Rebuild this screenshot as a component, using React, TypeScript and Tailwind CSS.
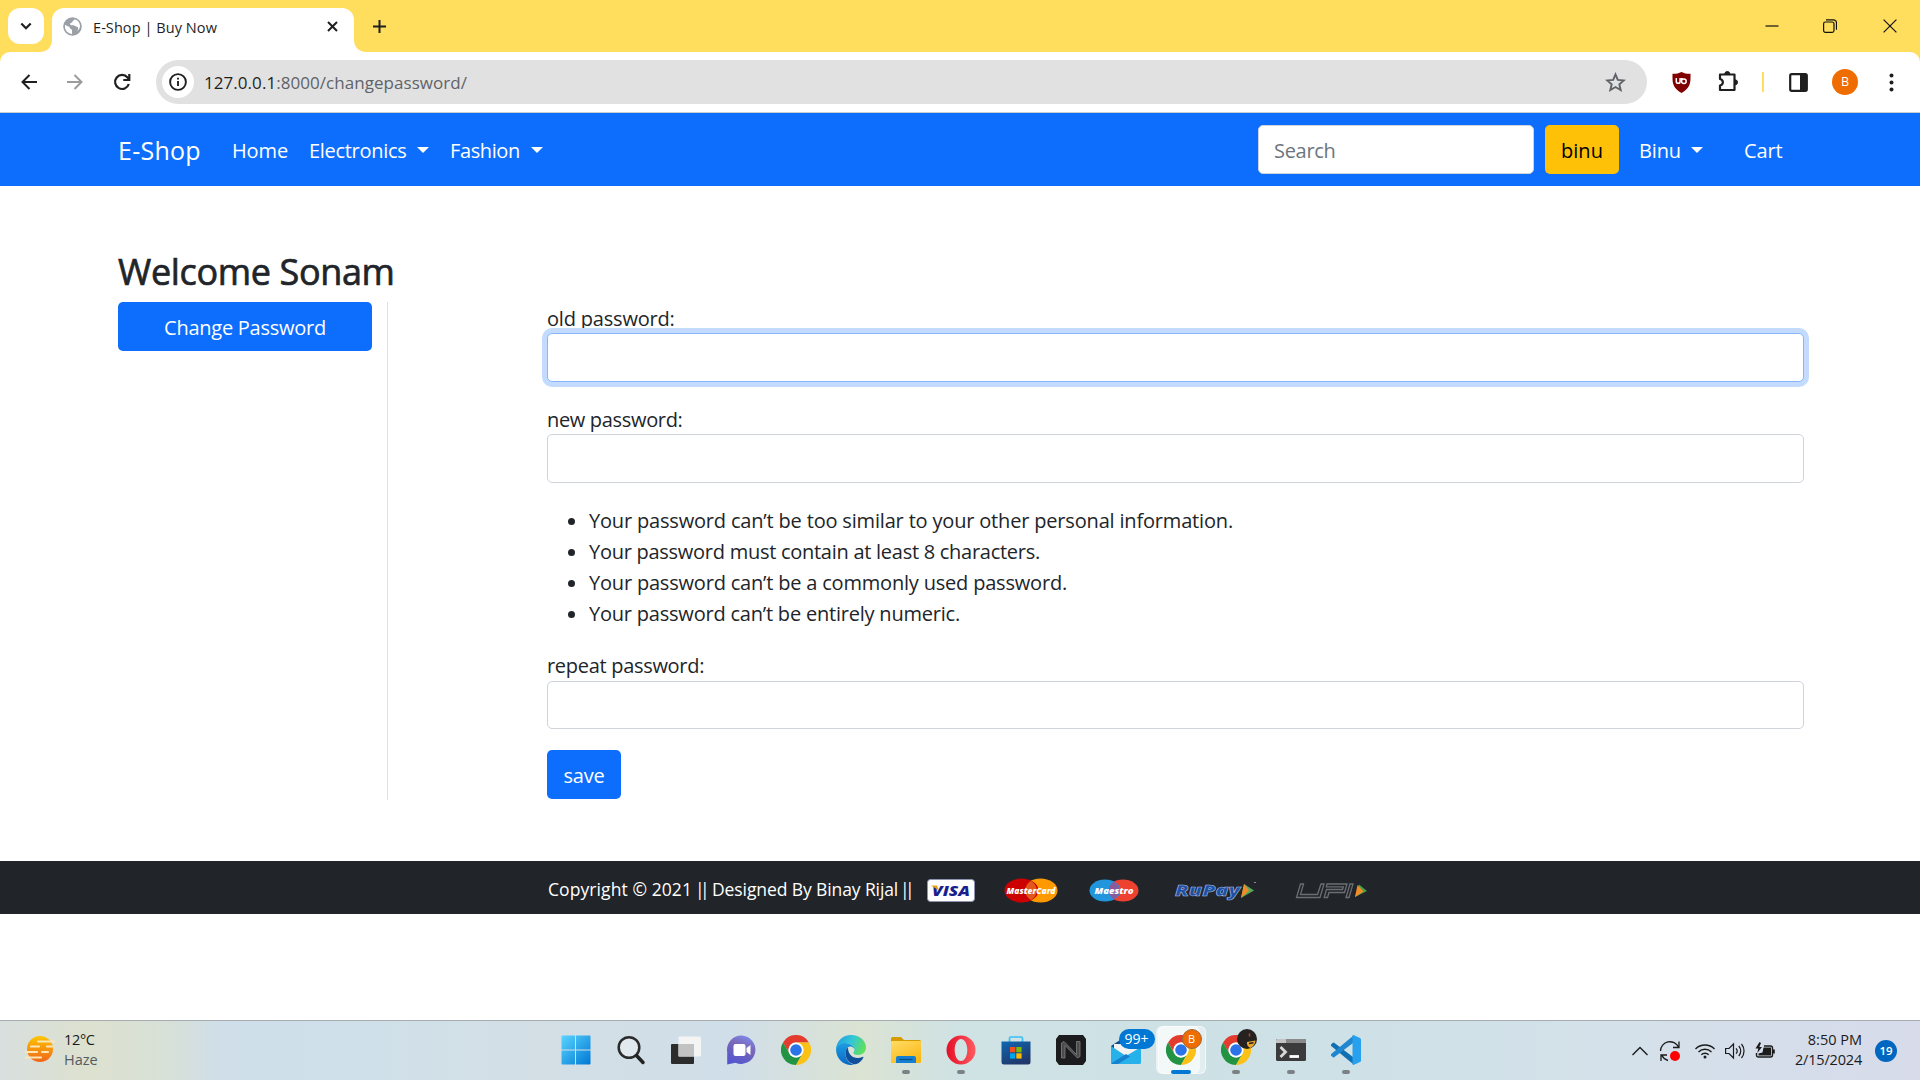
import React from "react";

const UI = "font-['Open_Sans','Noto_Sans',sans-serif]";

function Caret({ className = "" }: { className?: string }) {
  return (
    <span
      className={`inline-block h-0 w-0 border-x-[6px] border-t-[6px] border-x-transparent border-t-white ${className}`}
    />
  );
}

/* ---------- Browser chrome ---------- */

function Globe() {
  return (
    <svg className="h-[19px] w-[19px]" viewBox="0 0 20 20">
      <circle cx="10" cy="10" r="9.8" fill="#9aa0a6" />
      <path d="M2.2 8.2c2.2 2 4.600 1.300 5 3.300.3 1.300 2.300.7 2.300 2.500v3.800C5.500 17.600 2 14.300 2 10z" fill="#fff" />
      <path d="M12.300 2.400c-.3 1.500-2.300 1-2.400 2.600-.1 1.400-2.300.6-2.400 2.300 0 1.400 2 1.700 3.300 1.400 1.500-.3 1.900 1.200 3.600 1.500 1.700.2 1.700 1.400 1.300 2.900l-.9 2A8 8 0 0 0 18 10c0-3.500-2.300-6.600-5.700-7.600z" fill="#fff" />
    </svg>
  );
}

function TabStrip() {
  return (
    <div className="flex h-[52px] bg-[#ffde5d] pl-2">
      <div className="mt-2 flex h-9 w-9 items-center justify-center rounded-xl bg-white">
        <svg className="h-3 w-3" viewBox="0 0 12 12" fill="none" stroke="#1f1f1f" strokeWidth="2.2">
          <path d="M1.300 3.500 6 8.200l4.700-4.700" />
        </svg>
      </div>
      <svg className="mt-10 ml-[-4px] h-3 w-3" viewBox="0 0 12 12">
        <path d="M12 0v12H0C7 12 12 7 12 0z" fill="#fff" />
      </svg>
      <div className="mt-2 flex h-11 w-[302px] items-center rounded-t-xl bg-white pb-[7px] pl-[11px]">
        <Globe />
        <span className="ml-[11px] w-[234px] pt-[2px] text-[14.5px] leading-5 tracking-[0.07px] whitespace-nowrap text-[#1f1f1f]">E-Shop | Buy Now</span>
        <svg className="h-[11px] w-[11px]" viewBox="0 0 11 11" stroke="#1f1f1f" strokeWidth="2">
          <path d="M1 1l9 9M10 1l-9 9" />
        </svg>
      </div>
      <svg className="mt-10 h-3 w-3" viewBox="0 0 12 12">
        <path d="M0 0v12h12C5 12 0 7 0 0z" fill="#fff" />
      </svg>
      <svg className="mt-5 ml-[7px] h-[13px] w-[13px]" viewBox="0 0 13 13" stroke="#1f1f1f" strokeWidth="2">
        <path d="M6.500 0v13M0 6.500h13" />
      </svg>
      <div className="ml-auto flex h-[51px] items-center">
        <svg className="h-[14px] w-[14px]" viewBox="0 0 14 14" stroke="#111" strokeWidth="1.200">
          <path d="M0.500 7h13" />
        </svg>
        <svg className="ml-[44px] h-[14px] w-[14px]" viewBox="0 0 14 14" fill="none" stroke="#111" strokeWidth="1.200">
          <rect x="0.600" y="3" width="10.400" height="10.400" rx="1.800" />
          <path d="M3 .8h7.500a3 3 0 0 1 3 3v7" />
        </svg>
        <svg className="mr-[23px] ml-[46px] h-[14px] w-[14px]" viewBox="0 0 14 14" stroke="#111" strokeWidth="1.200">
          <path d="M.6.6l12.800 12.800M13.400.6.6 13.400" />
        </svg>
      </div>
    </div>
  );
}

function Toolbar() {
  return (
    <div className="bg-[#ffde5d]">
      <div className="flex h-[61px] items-center rounded-t-[10px] border-b border-[#c9ccd1] bg-white pl-[21px]">
        <svg className="h-[16px] w-[16px]" viewBox="0 0 16 16" fill="none" stroke="#1f1f1f" strokeWidth="2">
          <path d="M16 8H1.500M8.500 1 1.500 8l7 7" />
        </svg>
        <svg className="ml-[30px] h-[16px] w-[16px]" viewBox="0 0 16 16" fill="none" stroke="#9c9c9c" strokeWidth="2">
          <path d="M0 8h14.500M7.500 1l7 7-7 7" />
        </svg>
        <svg className="ml-[30px] h-[18px] w-[18px]" viewBox="0 0 18 18" fill="none" stroke="#1f1f1f" strokeWidth="2.200">
          <path d="M15.800 11a7 7 0 1 1-1.300-6.500L16 6" />
          <path d="M16.300 1v6h-6" />
        </svg>
        <div className="ml-[25px] flex h-11 w-[1491px] items-center rounded-full bg-[#e1e1e1] pl-[6px]">
          <span className="flex h-8 w-8 items-center justify-center rounded-full bg-white">
            <svg className="h-[18px] w-[18px]" viewBox="0 0 18 18" fill="none" stroke="#1f1f1f" strokeWidth="1.900">
              <circle cx="9" cy="9" r="7.900" />
              <path d="M9 8v5M9 4.700v1.900" />
            </svg>
          </span>
          <span className="ml-[10px] pt-[2px] text-[17px] leading-6 tracking-[0.05px] whitespace-nowrap text-[#5f6368]">
            <span className="text-[#1f1f1f]">127.0.0.1</span>:8000/changepassword/
          </span>
          <svg className="mr-[21px] ml-auto h-[21px] w-[21px]" viewBox="0 0 21 21" fill="none" stroke="#5f6368" strokeWidth="1.900">
            <path d="M10.500 2.400l2.300 5.500 6 .5-4.500 3.900 1.400 5.800-5.200-3.100-5.200 3.100 1.400-5.800-4.500-3.900 6-.5z" />
          </svg>
        </div>
        <svg className="ml-[25px] h-[21px] w-[19px]" viewBox="0 0 19 21">
          <path d="M9.500 0c3 1.500 6 2 9 1.800 0 8 .8 13.500-9 19.200C-.3 15.300.500 9.800.500 1.800c3 .2 6-.3 9-1.800z" fill="#800000" />
          <path d="M4.300 6v3.400a1.900 1.900 0 0 0 3.800 0V6" fill="none" stroke="#fff" strokeWidth="1.500" />
          <path d="M9.600 6v3.300a2.300 2.300 0 1 0 2.300-2.300c-.8 0-1.500.2-2.200.9" fill="none" stroke="#fff" strokeWidth="1.500" />
        </svg>
        <svg className="mt-[-3px] ml-[27px] h-[22px] w-[22px]" viewBox="0 0 22 22">
          <path d="M2 4.500h14.500v15.500H2v-4.500c3.800-.8 3.800-5.700 0-6.500z" fill="none" stroke="#1f1f1f" strokeWidth="2.200" strokeLinejoin="round" />
          <path d="M6.800 4a2.500 2.500 0 0 1 5 0zM17 9.800a2.500 2.500 0 0 1 0 5z" fill="#1f1f1f" stroke="#1f1f1f" />
        </svg>
        <span className="ml-[22px] h-5 w-[2px] bg-[#ffde5d]" />
        <svg className="ml-[25px] h-[19px] w-[19px]" viewBox="0 0 19 19">
          <rect x="1.200" y="1.200" width="16.600" height="16.600" rx="1.500" fill="none" stroke="#1f1f1f" strokeWidth="2.200" />
          <path d="M11 1h7v17h-7z" fill="#1f1f1f" />
        </svg>
        <span className="ml-6 flex h-[26px] w-[26px] items-center justify-center rounded-full bg-[#ef6c00] text-[12.5px] text-white">B</span>
        <svg className="ml-[31px] h-[19px] w-[5px]" viewBox="0 0 5 19" fill="#1f1f1f">
          <circle cx="2.500" cy="2.500" r="2" />
          <circle cx="2.500" cy="9.500" r="2" />
          <circle cx="2.500" cy="16.500" r="2" />
        </svg>
      </div>
    </div>
  );
}

/* ---------- Shop page ---------- */

function ShopNav() {
  return (
    <nav className="flex h-[73px] items-center bg-[#0d6efd] pl-[118px] text-[20px] whitespace-nowrap text-white">
      <span className="w-[114px] pt-[2px] text-[25px] tracking-[0.25px]">E-Shop</span>
      <span className="w-[77px] pt-[2px] tracking-[-0.13px]">Home</span>
      <span className="w-[108px] pt-[2px] tracking-[-0.3px]">Electronics</span>
      <Caret />
      <span className="ml-[21px] w-[81px] pt-[2px] tracking-[-0.4px]">Fashion</span>
      <Caret />
      <div className="ml-auto flex h-[49px] w-[276px] items-center rounded-[5px] border border-[#ced4da] bg-white pt-[2px] pl-[15px] tracking-[-0.3px] text-[#6c757d]">
        Search
      </div>
      <div className="ml-[11px] flex h-[49px] w-[74px] items-center justify-center rounded-[5px] bg-[#ffc107] pt-[2px] text-black">
        binu
      </div>
      <span className="ml-[20px] w-[52px] pt-[2px] tracking-[-0.13px]">Binu</span>
      <Caret />
      <span className="mr-[136px] ml-[41px] w-[40px] pt-[2px] tracking-[-0.1px]">Cart</span>
    </nav>
  );
}

const rules: [string, string][] = [
  ["Your password can\u2019t be too similar to your other personal information.", "tracking-[-0.176px]"],
  ["Your password must contain at least 8 characters.", "tracking-[-0.268px]"],
  ["Your password can\u2019t be a commonly used password.", "tracking-[-0.194px]"],
  ["Your password can\u2019t be entirely numeric.", "tracking-[-0.21px]"],
];

function PasswordForm() {
  return (
    <div className="ml-[159px] flex w-[1257px] shrink-0 flex-col text-[20px] text-[#212529]">
      <label className="h-[31px] leading-[33px] tracking-[-0.19px]">old password:</label>
      <div className="mb-[21px] h-[49px] rounded-[5px] border border-[#86b7fe] bg-white ring-[5px] ring-[#c2dbfe]" />
      <label className="h-[31px] leading-[33px] tracking-[-0.33px]">new password:</label>
      <div className="mb-[21px] h-[49px] rounded-[5px] border border-[#ced4da] bg-white" />
      <ul className="mt-px mb-5 leading-[31px]">
        {rules.map(([text, tracking]) => (
          <li key={text} className="flex items-center pl-[21px]">
            <span className="mt-[2px] mr-[14px] h-[7px] w-[7px] rounded-full bg-[#212529]" />
            <span className={tracking}>{text}</span>
          </li>
        ))}
      </ul>
      <label className="h-8 leading-[34px] tracking-[-0.3px]">repeat password:</label>
      <div className="mb-[21px] h-12 rounded-[5px] border border-[#ced4da] bg-white" />
      <div className="flex h-[49px] w-[74px] items-center justify-center rounded-[5px] bg-[#0d6efd] pt-[3px] tracking-[-0.22px] text-white">
        save
      </div>
    </div>
  );
}

function Payments() {
  const f = "'Open Sans',sans-serif";
  return (
    <>
      <svg className="h-[23px] w-12 overflow-visible" viewBox="0 0 48 23">
        <rect x=".5" y=".5" width="47" height="22" rx="3" fill="#fff" stroke="#8d93b0" />
        <text x="5" y="17" textLength="38" lengthAdjust="spacingAndGlyphs" fontFamily={f} fontSize="14.500" fontWeight="800" fontStyle="italic" fill="#1a1f8c">VISA</text>
        <path d="M4 6.500h6l2 5z" fill="#e9a11c" />
      </svg>
      <svg className="ml-[29px] h-[25px] w-[54px] overflow-visible" viewBox="0 0 54 25">
        <ellipse cx="36.500" cy="12.500" rx="17" ry="12" fill="#ff9900" />
        <ellipse cx="17.500" cy="12.500" rx="17" ry="12" fill="#cc0000" />
        <path d="M27 2.800a14 12 0 0 1 0 19.400a14 12 0 0 1 0-19.400z" fill="#e2571a" />
        <text x="2.500" y="16" textLength="49" lengthAdjust="spacingAndGlyphs" fontFamily={f} fontSize="9.500" fontWeight="800" fontStyle="italic" fill="#fff">MasterCard</text>
      </svg>
      <svg className="ml-[31px] h-[23px] w-[50px] overflow-visible" viewBox="0 0 50 23">
        <ellipse cx="34" cy="11.500" rx="15.500" ry="11" fill="#ee4130" />
        <ellipse cx="16" cy="11.500" rx="15.500" ry="11" fill="#2196dd" />
        <path d="M25 2.600a13 11 0 0 1 0 17.800a13 11 0 0 1 0-17.800z" fill="#8a5a9a" />
        <text x="5.500" y="15" textLength="39" lengthAdjust="spacingAndGlyphs" fontFamily={f} fontSize="9" fontWeight="800" fontStyle="italic" fill="#fff">Maestro</text>
      </svg>
      <svg className="ml-[35px] h-[22px] w-[84px] overflow-visible" viewBox="0 0 84 22">
        <text x="1" y="16" textLength="65" lengthAdjust="spacingAndGlyphs" fontFamily={f} fontSize="15" fontWeight="800" fontStyle="italic" fill="#1d4fa3" stroke="#a9bfe2" strokeWidth=".5">RuPay</text>
        <path d="M70 4l10 6.500-13 7.500z" fill="#5aa85a" />
        <path d="M70 4l5 6.500-8 7.500z" fill="#f28c28" />
        <path d="M80 2.500h2" stroke="#888" />
      </svg>
      <svg className="ml-[37px] h-[22px] w-[74px]" viewBox="0 0 74 22">
        <g fill="none" stroke="#6b6e72" strokeWidth="1.300">
          <path d="M5.500 4h3L5.500 14.500h17L26 4h3l-4 13.500H1.500z" />
          <path d="M32 4h20l-2.500 8.500H34L32.500 17.500h-3.300L31.500 9.500h16l.8-2.700H31.300z" />
          <path d="M55 4h3l-4 13.500h-3z" />
        </g>
        <path d="M64 4.500l8 6.500-12 6z" fill="#4aa04a" />
        <path d="M62.500 5l6 6.500-8.500 5.500z" fill="#f28c28" />
      </svg>
    </>
  );
}

/* ---------- Taskbar ---------- */

function Chrome() {
  return (
    <svg className="h-[30px] w-[30px]" viewBox="0 0 48 48">
      <path d="M3.200 12A24 24 0 0 1 44.800 12H24A12 12 0 0 0 13.600 30z" fill="#e33b2e" />
      <path d="M3.200 12 13.600 30A12 12 0 0 0 34.400 30L24 48A24 24 0 0 1 3.200 12z" fill="#229342" />
      <path d="M44.800 12A24 24 0 0 1 24 48L34.400 30A12 12 0 0 0 24 12z" fill="#fbc116" />
      <circle cx="24" cy="24" r="12" fill="#fff" />
      <circle cx="24" cy="24" r="9.300" fill="#2a73e8" />
    </svg>
  );
}

const I = "h-[30px] w-[30px]";

const StartIcon = () => (
  <svg className={I} viewBox="0 0 30 30">
    <defs>
      <linearGradient id="st" x1="0" y1="0" x2="1" y2="1">
        <stop offset="0" stopColor="#5ad4ff" />
        <stop offset="1" stopColor="#0078d4" />
      </linearGradient>
    </defs>
    <path d="M.5 1.500q0-1 1-1H14v14H.5zM15 .5h13.500q1 0 1 1v13H15zM.5 15.500H14v14H1.500q-1 0-1-1zM15 15.500h14.500v13q0 1-1 1H15z" fill="url(#st)" />
  </svg>
);
const SearchIcon = () => (
  <svg className={I} viewBox="0 0 30 30" fill="none">
    <circle cx="13" cy="12.500" r="10.300" fill="#ffffff55" stroke="#2b2b2b" strokeWidth="2.500" />
    <path d="M20.500 20.500l6.500 7" stroke="#222" strokeWidth="3.500" strokeLinecap="round" />
  </svg>
);
const TaskViewIcon = () => (
  <svg className={I} viewBox="0 0 30 30">
    <rect x="0" y="9" width="23" height="20" rx="1" fill="#2c2c2c" />
    <rect x="7.500" y="1.500" width="22.500" height="20" rx="1" fill="#f4f4f4" />
    <rect x="7.500" y="9" width="15.500" height="12.500" fill="#c2c2c2" />
  </svg>
);
const ChatIcon = () => (
  <svg className={I} viewBox="0 0 30 30">
    <defs>
      <linearGradient id="ch" x1=".8" y1="0" x2=".4" y2="1">
        <stop offset="0" stopColor="#7d8df0" />
        <stop offset=".4" stopColor="#7b68b8" />
        <stop offset="1" stopColor="#5556cf" />
      </linearGradient>
    </defs>
    <path d="M15.500.500a14.200 14.200 0 1 1-6 27.200L1.200 29.500V17A14.200 14.200 0 0 1 15.500.500z" fill="url(#ch)" />
    <rect x="7.500" y="9" width="12" height="12" rx="2" fill="#fff" />
    <path d="M20.500 13l4-3v10l-4-3z" fill="#fff" />
  </svg>
);
const EdgeIcon = () => (
  <svg className={I} viewBox="0 0 30 30">
    <defs>
      <linearGradient id="eg" x1="0" y1=".2" x2="1" y2=".5">
        <stop offset="0" stopColor="#1f9de0" />
        <stop offset=".5" stopColor="#33c6d8" />
        <stop offset="1" stopColor="#5fe05a" />
      </linearGradient>
      <linearGradient id="eb" x1="0" y1="0" x2="0" y2="1">
        <stop offset="0" stopColor="#1b9de2" />
        <stop offset="1" stopColor="#0b68c4" />
      </linearGradient>
    </defs>
    <path d="M0 14C.5 6 7 0 15 0c9 0 15 6 15 12.500 0 4.500-3.500 7.500-8 7.500-3.500 0-5-1.200-4.500-2.500.6-1 1-1.800 1-3C18.500 11 14 8 9 8 5 8 2 10 0 14z" fill="url(#eg)" />
    <path d="M0 14c1.500-4 5-6 9-6 5 0 9.500 3 9.500 6.500-.3-1.500-2-3-4-3-3 0-5 3-5 7 0 6 4 10.500 9 11-8.500 2.500-18.500-4-18.500-15.500z" fill="url(#eb)" />
    <path d="M12 12.500c-1.600 1-2.600 3.300-2.500 6 .2 6 4.500 10.600 9.500 10.800 4-.6 7-3.600 8.500-7 0-.6-.4-.7-.9-.4-7 3.200-14.600-.4-14.600-9.400z" fill="#0f4f9c" />
  </svg>
);
const FolderIcon = () => (
  <svg className={I} viewBox="0 0 30 30">
    <defs>
      <linearGradient id="fo" x1="0" y1="0" x2="0.6" y2="1">
        <stop offset="0" stopColor="#ffdc66" />
        <stop offset="1" stopColor="#fbb917" />
      </linearGradient>
    </defs>
    <path d="M0 3.500Q0 2 1.500 2H10l3 3h15.500q1.500 0 1.500 1.500V10H0z" fill="#d99a00" />
    <rect x="0" y="6" width="30" height="22" rx="1" fill="url(#fo)" />
    <path d="M5 28v-5q0-2 2-2h16q2 0 2 2v5z" fill="#1480cf" />
    <path d="M8.500 24.500h13" stroke="#0a4e8c" strokeWidth="1.200" />
  </svg>
);
const OperaIcon = () => (
  <svg className={I} viewBox="0 0 30 30">
    <defs>
      <linearGradient id="op" x1="0" y1="0" x2="1" y2="0">
        <stop offset="0" stopColor="#e30f28" />
        <stop offset="1" stopColor="#ff5a5f" />
      </linearGradient>
    </defs>
    <path fillRule="evenodd" d="M15 .5a14.500 14.500 0 1 0 0 29 14.500 14.500 0 1 0 0-29zM15 4c3.800 0 6.300 5 6.300 11s-2.500 11-6.300 11-6.300-5-6.300-11S11.200 4 15 4z" fill="url(#op)" />
  </svg>
);
const StoreIcon = () => (
  <svg className={I} viewBox="0 0 30 30">
    <defs>
      <linearGradient id="so" x1="0" y1="0" x2="0.5" y2="1">
        <stop offset="0" stopColor="#0f67b3" />
        <stop offset="1" stopColor="#20386b" />
      </linearGradient>
    </defs>
    <path d="M8.500 7V3.500Q8.500 2 10 2h10q1.500 0 1.500 1.500V7" fill="none" stroke="#3bc0f5" strokeWidth="1.700" />
    <path d="M.5 6.500h29V27q0 2.500-2.500 2.500H3Q.5 29.500.5 27z" fill="url(#so)" />
    <path d="M9 12h5.300v5.300H9z" fill="#f25022" />
    <path d="M15.300 12h5.300v5.300h-5.300z" fill="#7fba00" />
    <path d="M9 18.300h5.300v5.300H9z" fill="#00a4ef" />
    <path d="M15.300 18.300h5.300v5.300h-5.300z" fill="#ffb900" />
  </svg>
);
const NIcon = () => (
  <svg className={I} viewBox="0 0 30 30">
    <path d="M3 0h24l3 4v22l-3 4H3l-3-4V4z" fill="#1c1c1e" />
    <path d="M5.500 23V8L8 6.500l12.500 13V6.500h3.500V21.500L21.500 23 9 10.500V23z" fill="#4b4b4e" stroke="#8b8b8e" strokeWidth=".7" />
  </svg>
);
const MailIcon = () => (
  <svg className={I} viewBox="0 0 30 30">
    <path d="M0 11 15 1l15 10v6H0z" fill="#134b86" />
    <path d="M3 9h24v8l-12 6L3 15z" fill="#f2f2f2" />
    <path d="M0 11l15 10 15-9v15.500q0 1.500-1.500 1.500h-27Q0 29 0 27.500z" fill="#27b1ea" />
    <path d="M0 28.500 15 19l4 2.500L7 29H1z" fill="#1682cf" />
  </svg>
);
const TerminalIcon = () => (
  <svg className={I} viewBox="0 0 30 30">
    <rect x="0" y="4" width="30" height="22" rx="1.500" fill="#3b3b3b" />
    <path d="M1.500 4h27Q30 4 30 5.500V8H0V5.500Q0 4 1.500 4z" fill="#8a8a8a" />
    <path d="M0 5.500Q0 4 1.500 4H10v4H0z" fill="#c4c4c4" />
    <path d="M4.500 12l5 5-5 5" fill="none" stroke="#d8d8d8" strokeWidth="2.800" />
    <path d="M13.500 21.500H23" stroke="#fff" strokeWidth="2.800" />
  </svg>
);
const CodeIcon = () => (
  <svg className={I} viewBox="0 0 30 30">
    <path d="M0 9.500l2-1.800q.6-.4 1.200 0L22 22v7L.2 11q-.7-.8-.2-1.500z" fill="#1070b3" />
    <path d="M0 20.500l2 1.800q.6.400 1.200 0L22 8V1L.2 19q-.7.8-.2 1.500z" fill="#1f86cf" />
    <path d="M21.500.3q.8-.5 1.500 0l6 2.800q1 .5 1 1.500v20.800q0 1-1 1.500l-6 2.800q-.7.500-1.500-.2z" fill="#27a1ee" />
  </svg>
);

function AppSlot({ children, dot = false, active = false }: { children: React.ReactNode; dot?: boolean; active?: boolean }) {
  return (
    <div className="relative flex h-12 w-[55px] justify-center pt-[9px]">
      {active && (
        <>
          <span className="absolute top-0 left-[5px] h-12 w-12 rounded-md border border-white/60 bg-white/40" />
          <span className="absolute top-0 left-[3px] h-12 w-[44px] rounded-md bg-white/60" />
        </>
      )}
      <div className="relative h-[30px]">{children}</div>
      {dot && <span className="absolute bottom-0 h-1 w-2 rounded-full bg-[#7b8285]" />}
      {active && <span className="absolute bottom-0 h-1 w-5 rounded-full bg-[#0078d4]" />}
    </div>
  );
}

function Taskbar() {
  return (
    <footer className="flex h-[60px] border-t border-[#a6adb2] bg-[linear-gradient(90deg,#d8dfde_0px,#dde1cf_90px,#d7e0d8_170px,#cfdee8_220px,#cfe0ea_330px,#d3dfe5_540px,#d0dee9_730px,#dbe3d3_860px,#cfe2e4_960px,#cde1e6_1300px,#d4e1ea_1600px,#d7dbea_1920px)] text-[14.5px] leading-5 whitespace-nowrap text-[#1b1b1b]">
      <div className="flex w-[548px] pt-[9px] pl-[25px]">
        <svg className="mt-[5px] h-[28px] w-[30px]" viewBox="0 0 30 28">
          <defs>
            <linearGradient id="sun" x1="0" y1="0" x2="0" y2="1">
              <stop offset="0" stopColor="#fdc500" />
              <stop offset="1" stopColor="#f0651a" />
            </linearGradient>
          </defs>
          <circle cx="15" cy="14" r="13" fill="url(#sun)" />
          <g stroke="#fbe6b8" strokeWidth="2.200" strokeLinecap="round">
            <path d="M13 6.500h16M6 11.500h8M22 11.500h5M1 17h11M17 17h6M1 22.500h15" />
          </g>
        </svg>
        <div className="ml-[9px]">
          <div className="tracking-[-0.35px]">12°C</div>
          <div className="text-[#555b5e]">Haze</div>
        </div>
      </div>
      <div className="mt-[5px] flex">
        <AppSlot><StartIcon /></AppSlot>
        <AppSlot><SearchIcon /></AppSlot>
        <AppSlot><TaskViewIcon /></AppSlot>
        <AppSlot><ChatIcon /></AppSlot>
        <AppSlot><Chrome /></AppSlot>
        <AppSlot><EdgeIcon /></AppSlot>
        <AppSlot dot><FolderIcon /></AppSlot>
        <AppSlot dot><OperaIcon /></AppSlot>
        <AppSlot><StoreIcon /></AppSlot>
        <AppSlot><NIcon /></AppSlot>
        <AppSlot>
          <MailIcon />
          <span className="absolute -top-[6px] left-2 flex h-5 w-9 items-center justify-center rounded-full bg-[#0078d4] text-[14px] text-white">99+</span>
        </AppSlot>
        <AppSlot active>
          <Chrome />
          <span className="absolute -top-[6px] left-4 flex h-5 w-5 items-center justify-center rounded-full border border-[#9a6a3c] bg-[#ef6c00] text-[11px] text-white">B</span>
        </AppSlot>
        <AppSlot dot>
          <Chrome />
          <svg className="absolute -top-[6px] left-4 h-5 w-5" viewBox="0 0 20 20">
            <circle cx="10" cy="10" r="10" fill="#26221f" />
            <path d="M10 13l8.500-1.500q-.5 5-5 7.500-4-1.500-3.500-6z" fill="#e6a92a" />
            <path d="M12 14.500l4.500-.8" stroke="#26221f" strokeWidth="1.500" />
            <path d="M12.500 4.500v3" stroke="#a4493a" strokeWidth="1.600" />
          </svg>
        </AppSlot>
        <AppSlot dot><TerminalIcon /></AppSlot>
        <AppSlot dot><CodeIcon /></AppSlot>
      </div>
      <div className="ml-auto flex h-[59px] items-center pr-[23px]">
        <svg className="h-[10px] w-4" viewBox="0 0 16 10" fill="none" stroke="#1b1b1b" strokeWidth="1.400">
          <path d="M.5 9 8 1.500 15.500 9" />
        </svg>
        <svg className="ml-[11px] h-[22px] w-[22px]" viewBox="0 0 22 22" fill="none" stroke="#1b1b1b" strokeWidth="1.300">
          <path d="M1.500 11a9.500 9.500 0 0 1 18-4M20 1.500V7.500h-6M2 21v-6h6M3 15.500A9.500 9.500 0 0 0 9 20.500" />
          <circle cx="16" cy="16" r="5" fill="#ff0000" stroke="none" />
        </svg>
        <svg className="ml-[14px] h-[16px] w-5" viewBox="0 0 20 16" fill="none" stroke="#1b1b1b" strokeWidth="1.400">
          <path d="M.5 6a13.400 13.400 0 0 1 19 0M3.500 9a9.200 9.200 0 0 1 13 0M6.300 11.800a5.300 5.300 0 0 1 7.400 0" />
          <circle cx="10" cy="14" r="1.500" fill="#1b1b1b" stroke="none" />
        </svg>
        <svg className="ml-[10px] h-[18px] w-5" viewBox="0 0 20 18" fill="none" stroke="#1b1b1b" strokeWidth="1.200">
          <path d="M.6 6.500H4L8.500 2v14L4 11.500H.6zM11 6.300a4 4 0 0 1 0 5.400M13.800 4a7.500 7.500 0 0 1 0 10M16.500 2a11 11 0 0 1 0 14" />
        </svg>
        <svg className="ml-[10px] h-[18px] w-5" viewBox="0 0 20 18">
          <path d="M9 4h6.500q2 0 2 2v7q0 2-2 2H3.500q-2 0-2-2v-2" fill="none" stroke="#1b1b1b" strokeWidth="1.400" />
          <path d="M8.500 5.500h7.500v8H3.500v-2l4-1z" fill="#1b1b1b" />
          <path d="M18 7.500h1.800v4H18z" fill="#1b1b1b" />
          <path d="M4.500 0 .5 6.500h2.800L2.300 11 7 5H4.300L6 1z" fill="#1b1b1b" />
        </svg>
        <div className="ml-5 flex w-[67px] flex-col items-end pb-px">
          <div>8:50 PM</div>
          <div className="tracking-[-0.18px]">2/15/2024</div>
        </div>
        <span className="ml-[13px] flex h-[22px] w-[22px] items-center justify-center rounded-full bg-[#0067c0] text-[11.5px] font-semibold text-white">19</span>
      </div>
    </footer>
  );
}

export default function App() {
  return (
    <div className={`flex h-[1080px] w-[1920px] flex-col overflow-hidden bg-white ${UI}`}>
      <TabStrip />
      <Toolbar />
      <ShopNav />
      <main className="pt-[58px] pl-[118px]">
        <h2 className="h-[58px] text-[36px] leading-[55px] tracking-[-0.35px] whitespace-nowrap text-[#212529] [-webkit-text-stroke:0.7px_#212529]">Welcome Sonam</h2>
        <div className="flex h-[498px]">
          <div className="w-[270px] shrink-0 border-r border-[#dee2e6]">
            <div className="flex h-[49px] w-[254px] items-center justify-center rounded-[5px] bg-[#0d6efd] pt-[2px] text-[20px] tracking-[-0.25px] whitespace-nowrap text-white">
              Change Password
            </div>
          </div>
          <PasswordForm />
        </div>
      </main>
      <div className="mt-[61px] flex h-[53px] shrink-0 items-center bg-[#212529] pt-[6px] pl-[548px] text-[17.5px] whitespace-nowrap text-white">
        <div className="-mt-[2px] flex w-[379px] shrink-0">
          <span className="w-[147px] tracking-[0.08px]">Copyright © 2021</span>
          <span className="w-[17px] tracking-[-4.6px]">||</span>
          <span className="w-[188px] tracking-[-0.1px]">Designed By Binay Rijal</span>
          <span className="tracking-[-4.6px]">||</span>
        </div>
        <Payments />
      </div>
      <div className="grow" />
      <Taskbar />
    </div>
  );
}
